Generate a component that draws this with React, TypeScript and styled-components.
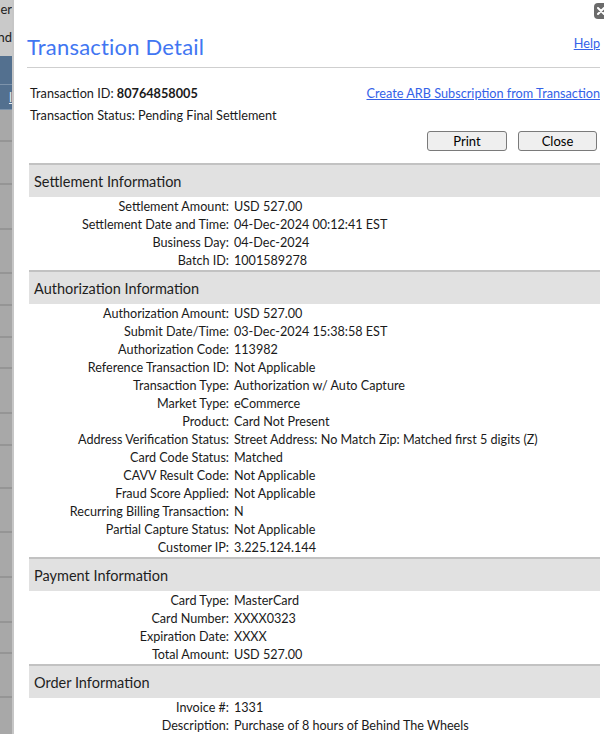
import React from "react";
import styled, { createGlobalStyle } from "styled-components";

const Global = createGlobalStyle`
  html, body { margin: 0; padding: 0; background: #fff; }
  body { font-family: Lato, "Liberation Sans", Arial, sans-serif; color: #1a1a1a; }
  * { box-sizing: border-box; }
`;

const Page = styled.div`
  display: flex;
  width: 604px;
  height: 734px;
  overflow: hidden;
`;

const Strip = styled.div`
  width: 14px;
  flex: none;
  display: flex;
  flex-direction: column;
  background: #a9a9a9;
  border-right: 2px solid #c6c6c6;
  overflow: hidden;
`;

const StripCell = styled.div<{ $h: number; $tone: "light" | "blue" | "gray" }>`
  height: ${(p) => p.$h}px;
  flex: none;
  display: flex;
  justify-content: flex-end;
  align-items: center;
  white-space: nowrap;
  overflow: hidden;
  font-size: 13px;
  background: ${(p) => (p.$tone === "light" ? "#c9c9c9" : p.$tone === "blue" ? "#53708f" : "#a8a8a8")};
  color: ${(p) => (p.$tone === "blue" ? "#e8eef5" : "#222")};
  border-bottom: ${(p) => (p.$tone === "light" ? "none" : p.$tone === "blue" ? "1px solid #7d93ab" : "2px solid #959595")};
`;

const StripText = styled.span<{ $u?: boolean }>`
  text-decoration: ${(p) => (p.$u ? "underline" : "none")};
`;

const Modal = styled.div`
  flex: 1;
  position: relative;
  background: #fff;
  padding: 0 4px 0 13px;
`;

const CloseX = styled.div`
  position: absolute;
  top: 3px;
  right: -6px;
  width: 16px;
  height: 16px;
  border-radius: 4px;
  background: #6b6b6b;
  display: flex;
  align-items: center;
  justify-content: flex-start;
  padding-left: 2px;
`;

const TitleRow = styled.div`
  display: flex;
  justify-content: space-between;
  align-items: flex-start;
  padding-top: 34px;
  padding-bottom: 7px;
  border-bottom: 1px solid #cfcfcf;
`;

const Title = styled.h1`
  margin: 0;
  font-family: Lato, "Liberation Sans", Arial, sans-serif;
  font-weight: 400;
  font-size: 22px;
  line-height: 26px;
  color: #4176f2;
  letter-spacing: 0.2px;
`;

const Link = styled.a`
  color: #3462e8;
  text-decoration: underline;
  font-size: 12.7px;
  line-height: 16px;
  cursor: pointer;
`;

const HelpLink = styled(Link)`
  margin-top: 1px;
`;

const InfoLine = styled.div<{ $first?: boolean }>`
  display: flex;
  justify-content: space-between;
  align-items: center;
  padding-left: 3px;
  font-size: 12.7px;
  line-height: 18px;
  margin-top: ${(p) => (p.$first ? 16 : 4)}px;
`;

const Bold = styled.b`
  font-weight: 700;
`;

const ButtonRow = styled.div`
  display: flex;
  justify-content: flex-end;
  gap: 11px;
  padding-right: 3px;
  margin-top: 7px;
`;

const Button = styled.button<{ $w: number }>`
  width: ${(p) => p.$w}px;
  height: 20px;
  padding: 0;
  font-family: Lato, "Liberation Sans", Arial, sans-serif;
  font-size: 13px;
  color: #000;
  background: #efefef;
  border: 1px solid #7a7a7a;
  border-radius: 3px;
`;

const Sections = styled.div`
  margin-top: 12px;
  padding-left: 2px;
`;

const Section = styled.section`
  border-top: 2px solid #c2c2c2;
`;

const SectionHeader = styled.div`
  height: 32px;
  background: #e1e1e1;
  display: flex;
  align-items: center;
  padding-left: 5px;
  font-size: 14.5px;
  color: #1e1e1e;
`;

const Rows = styled.div`
  padding-top: 1px;
`;

const Row = styled.div`
  display: grid;
  grid-template-columns: 200px 1fr;
  column-gap: 5px;
  font-size: 12.6px;
  line-height: 18px;
  white-space: nowrap;
`;

const Label = styled.span`
  text-align: right;
`;

const Value = styled.span``;

const stripCells: { h: number; tone: "light" | "blue" | "gray"; text?: string; u?: boolean }[] = [
  { h: 18, tone: "light", text: "Order" },
  { h: 38, tone: "light", text: "Refund" },
  { h: 29, tone: "blue" },
  { h: 25, tone: "blue", text: "l", u: true },
  { h: 32, tone: "gray" },
  { h: 43, tone: "gray" },
  { h: 45, tone: "gray" },
  { h: 44, tone: "gray" },
  { h: 32, tone: "gray" },
  { h: 32, tone: "gray" },
  { h: 31, tone: "gray" },
  { h: 45, tone: "gray" },
  { h: 32, tone: "gray" },
  { h: 43, tone: "gray" },
  { h: 44, tone: "gray" },
  { h: 45, tone: "gray" },
  { h: 45, tone: "gray" },
  { h: 31, tone: "gray" },
  { h: 44, tone: "gray" },
  { h: 40, tone: "gray" },
];

const sections: { title: string; rows: [string, string][] }[] = [
  {
    title: "Settlement Information",
    rows: [
      ["Settlement Amount:", "USD 527.00"],
      ["Settlement Date and Time:", "04-Dec-2024 00:12:41 EST"],
      ["Business Day:", "04-Dec-2024"],
      ["Batch ID:", "1001589278"],
    ],
  },
  {
    title: "Authorization Information",
    rows: [
      ["Authorization Amount:", "USD 527.00"],
      ["Submit Date/Time:", "03-Dec-2024 15:38:58 EST"],
      ["Authorization Code:", "113982"],
      ["Reference Transaction ID:", "Not Applicable"],
      ["Transaction Type:", "Authorization w/ Auto Capture"],
      ["Market Type:", "eCommerce"],
      ["Product:", "Card Not Present"],
      ["Address Verification Status:", "Street Address: No Match Zip: Matched first 5 digits (Z)"],
      ["Card Code Status:", "Matched"],
      ["CAVV Result Code:", "Not Applicable"],
      ["Fraud Score Applied:", "Not Applicable"],
      ["Recurring Billing Transaction:", "N"],
      ["Partial Capture Status:", "Not Applicable"],
      ["Customer IP:", "3.225.124.144"],
    ],
  },
  {
    title: "Payment Information",
    rows: [
      ["Card Type:", "MasterCard"],
      ["Card Number:", "XXXX0323"],
      ["Expiration Date:", "XXXX"],
      ["Total Amount:", "USD 527.00"],
    ],
  },
  {
    title: "Order Information",
    rows: [
      ["Invoice #:", "1331"],
      ["Description:", "Purchase of 8 hours of Behind The Wheels"],
    ],
  },
];

export default function App() {
  return (
    <>
      <Global />
      <Page>
        <Strip>
          {stripCells.map((c, i) => (
            <StripCell key={i} $h={c.h} $tone={c.tone}>
              {c.text && <StripText $u={c.u}>{c.text}</StripText>}
            </StripCell>
          ))}
        </Strip>
        <Modal>
          <CloseX>
            <svg width="10" height="10" viewBox="0 0 10 10">
              <path d="M2 2 L8 8 M8 2 L2 8" stroke="#fff" strokeWidth="2" strokeLinecap="round" />
            </svg>
          </CloseX>
          <TitleRow>
            <Title>Transaction Detail</Title>
            <HelpLink>Help</HelpLink>
          </TitleRow>
          <InfoLine $first>
            <span>
              Transaction ID: <Bold>80764858005</Bold>
            </span>
            <Link>Create ARB Subscription from Transaction</Link>
          </InfoLine>
          <InfoLine>
            <span>Transaction Status: Pending Final Settlement</span>
          </InfoLine>
          <ButtonRow>
            <Button $w={80}>Print</Button>
            <Button $w={79}>Close</Button>
          </ButtonRow>
          <Sections>
            {sections.map((s) => (
              <Section key={s.title}>
                <SectionHeader>{s.title}</SectionHeader>
                <Rows>
                  {s.rows.map(([l, v]) => (
                    <Row key={l}>
                      <Label>{l}</Label>
                      <Value>{v}</Value>
                    </Row>
                  ))}
                </Rows>
              </Section>
            ))}
          </Sections>
        </Modal>
      </Page>
    </>
  );
}
